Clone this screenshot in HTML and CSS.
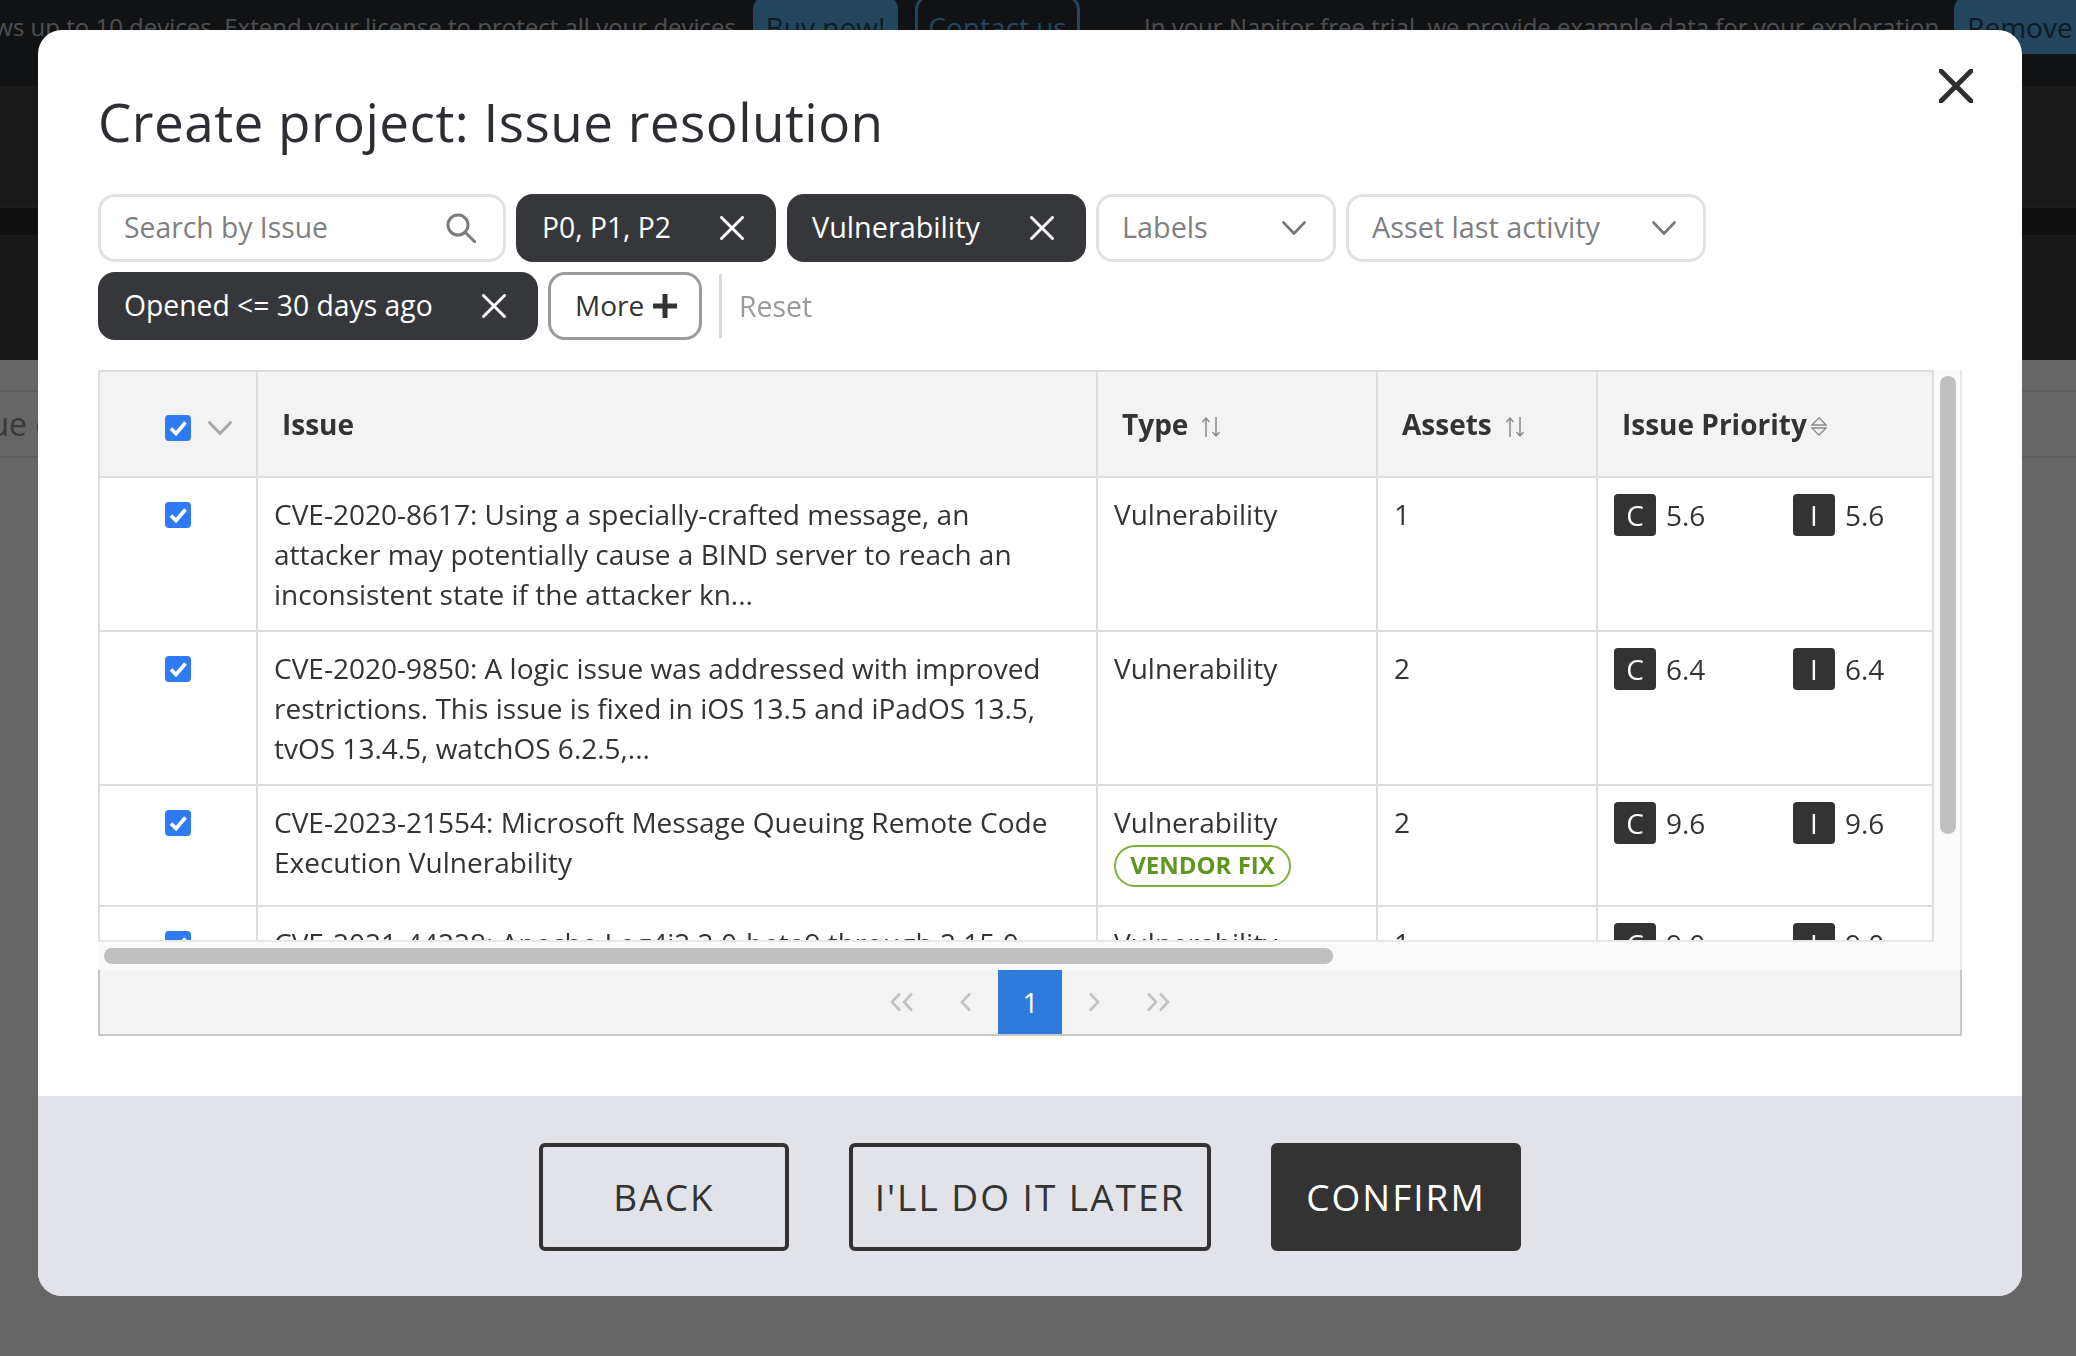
FILE: index.html
```html
<!DOCTYPE html>
<html lang="en">
<head>
<meta charset="utf-8">
<title>Create project: Issue resolution</title>
<link rel="stylesheet" href="styles.css">
</head>
<body>
<div class="page">
  <div class="banner">
    <div class="banner-left">
      <span class="banner-text">Your license allows up to 10 devices. Extend your license to protect all your devices</span>
      <span class="bn bn-fill bn-buy">Buy now!</span>
      <span class="bn bn-line">Contact us</span>
    </div>
    <span class="banner-text banner-trial">In your Napitor free trial, we provide example data for your exploration</span>
    <span class="bn bn-fill bn-remove">Remove</span>
  </div>
  <div class="nav"></div>
  <div class="subnav"></div>
  <div class="hero"></div>
  <div class="tabrow"><span class="tabtext">Issue count</span></div>
</div>

<div class="overlay">
  <div class="modal">
    <div class="modal-body">
      <div class="modal-head">
        <h1 class="title">Create project: Issue resolution</h1>
        <button class="close" aria-label="Close">
          <svg width="34" height="34" viewBox="0 0 34 34"><path d="M2 2 L32 32 M32 2 L2 32" class="ic-close"/></svg>
        </button>
      </div>

      <div class="filters">
        <div class="fbox f-search"><span class="ph">Search by Issue</span>
          <svg width="30" height="30" viewBox="0 0 30 30"><circle cx="12" cy="12" r="10" class="ic-search"/><path d="M19.5 19.5 L29 29" class="ic-search"/></svg>
        </div>
        <div class="fbox chip f-p"><span>P0, P1, P2</span>
          <svg width="24" height="24" viewBox="0 0 24 24"><path d="M1.5 1.5 L22.5 22.5 M22.5 1.5 L1.5 22.5" class="ic-x"/></svg>
        </div>
        <div class="fbox chip f-v"><span>Vulnerability</span>
          <svg width="24" height="24" viewBox="0 0 24 24"><path d="M1.5 1.5 L22.5 22.5 M22.5 1.5 L1.5 22.5" class="ic-x"/></svg>
        </div>
        <div class="fbox f-labels"><span class="ph">Labels</span>
          <svg width="24" height="14" viewBox="0 0 24 14"><path d="M1.5 1.5 L12 12.5 L22.5 1.5" class="ic-chev"/></svg>
        </div>
        <div class="fbox f-asset"><span class="ph">Asset last activity</span>
          <svg width="24" height="14" viewBox="0 0 24 14"><path d="M1.5 1.5 L12 12.5 L22.5 1.5" class="ic-chev"/></svg>
        </div>
        <div class="fbox chip f-o"><span>Opened &lt;= 30 days ago</span>
          <svg width="24" height="24" viewBox="0 0 24 24"><path d="M1.5 1.5 L22.5 22.5 M22.5 1.5 L1.5 22.5" class="ic-x"/></svg>
        </div>
        <div class="fbox f-more"><span>More</span>
          <svg width="24" height="24" viewBox="0 0 24 24"><path d="M12 0 V24 M0 12 H24" class="ic-plus"/></svg>
        </div>
        <div class="f-div"></div>
        <span class="f-reset">Reset</span>
      </div>

      <div class="frame">
        <div class="viewport">
          <table class="grid">
            <colgroup>
              <col class="c1"><col class="c2"><col class="c3"><col class="c4"><col class="c5">
            </colgroup>
            <thead>
              <tr>
                <th class="sel-h"><span class="sel-inner">
                  <span class="cb"><svg width="26" height="26" viewBox="0 0 26 26"><path d="M6 13.5 L11 18.5 L20.5 7.5" class="ic-check"/></svg></span>
                  <svg width="24" height="14" viewBox="0 0 24 14"><path d="M1.5 1.5 L12 12.5 L22.5 1.5" class="ic-chev-h"/></svg>
                </span></th>
                <th class="th-issue">Issue</th>
                <th><span class="th-in">Type
                  <svg width="20" height="20" viewBox="0 0 20 20"><path d="M5 20 V1 M1.5 5 L5 1 L8.5 5 M15 0 V19 M11.5 15 L15 19 L18.5 15" class="ic-sort"/></svg></span></th>
                <th><span class="th-in">Assets
                  <svg width="20" height="20" viewBox="0 0 20 20"><path d="M5 20 V1 M1.5 5 L5 1 L8.5 5 M15 0 V19 M11.5 15 L15 19 L18.5 15" class="ic-sort"/></svg></span></th>
                <th><span class="th-in th-prio">Issue Priority
                  <svg class="tri" width="16" height="19" viewBox="0 0 16 19"><path d="M8 0.8 L15 8 H1 Z M1 11 H15 L8 18.2 Z" class="ic-tri"/></svg></span></th>
              </tr>
            </thead>
            <tbody>
              <tr class="r-tall">
                <td class="sel"><span class="cb"><svg width="26" height="26" viewBox="0 0 26 26"><path d="M6 13.5 L11 18.5 L20.5 7.5" class="ic-check"/></svg></span></td>
                <td>CVE-2020-8617: Using a specially-crafted message, an attacker may potentially cause a BIND server to reach an inconsistent state if the attacker kn...</td>
                <td>Vulnerability</td>
                <td>1</td>
                <td><div class="scores"><span class="score"><b class="tag">C</b>5.6</span><span class="score"><b class="tag">I</b>5.6</span></div></td>
              </tr>
              <tr class="r-tall">
                <td class="sel"><span class="cb"><svg width="26" height="26" viewBox="0 0 26 26"><path d="M6 13.5 L11 18.5 L20.5 7.5" class="ic-check"/></svg></span></td>
                <td>CVE-2020-9850: A logic issue was addressed with improved restrictions. This issue is fixed in iOS 13.5 and iPadOS 13.5, tvOS 13.4.5, watchOS 6.2.5,...</td>
                <td>Vulnerability</td>
                <td>2</td>
                <td><div class="scores"><span class="score"><b class="tag">C</b>6.4</span><span class="score"><b class="tag">I</b>6.4</span></div></td>
              </tr>
              <tr class="r-mid">
                <td class="sel"><span class="cb"><svg width="26" height="26" viewBox="0 0 26 26"><path d="M6 13.5 L11 18.5 L20.5 7.5" class="ic-check"/></svg></span></td>
                <td>CVE-2023-21554: Microsoft Message Queuing Remote Code Execution Vulnerability</td>
                <td>Vulnerability<br><span class="vendor">VENDOR FIX</span></td>
                <td>2</td>
                <td><div class="scores"><span class="score"><b class="tag">C</b>9.6</span><span class="score"><b class="tag">I</b>9.6</span></div></td>
              </tr>
              <tr class="r-tall">
                <td class="sel"><span class="cb"><svg width="26" height="26" viewBox="0 0 26 26"><path d="M6 13.5 L11 18.5 L20.5 7.5" class="ic-check"/></svg></span></td>
                <td>CVE-2021-44228: Apache Log4j2 2.0-beta9 through 2.15.0 (excluding security releases 2.12.2, 2.12.3, and 2.3.1) JNDI features used in...</td>
                <td>Vulnerability</td>
                <td>1</td>
                <td><div class="scores"><span class="score"><b class="tag">C</b>9.0</span><span class="score"><b class="tag">I</b>9.0</span></div></td>
              </tr>
            </tbody>
          </table>
        </div>
        <div class="vtrack"><div class="vthumb"></div></div>
        <div class="htrack"><div class="hthumb"></div></div>
        <div class="corner"></div>
      </div>

      <div class="pager">
        <span class="pg"><svg width="24" height="20" viewBox="0 0 24 20"><path d="M10 1.5 L2 10 L10 18.5 M22 1.5 L14 10 L22 18.5" class="ic-pg"/></svg></span>
        <span class="pg"><svg width="12" height="20" viewBox="0 0 12 20"><path d="M10 1.5 L2 10 L10 18.5" class="ic-pg"/></svg></span>
        <span class="pg pg-on">1</span>
        <span class="pg"><svg width="12" height="20" viewBox="0 0 12 20"><path d="M2 1.5 L10 10 L2 18.5" class="ic-pg"/></svg></span>
        <span class="pg"><svg width="24" height="20" viewBox="0 0 24 20"><path d="M2 1.5 L10 10 L2 18.5 M14 1.5 L22 10 L14 18.5" class="ic-pg"/></svg></span>
      </div>
    </div>

    <div class="modal-foot">
      <button class="act act-back">BACK</button>
      <button class="act act-later">I'LL DO IT LATER</button>
      <button class="act act-go">CONFIRM</button>
    </div>
  </div>
</div>
</body>
</html>
```
FILE: styles.css
```css
* { box-sizing: border-box; }
html, body { margin: 0; padding: 0; height: 100%; }
body {
  font-family: "Open Sans", "Noto Sans", sans-serif;
  font-size: 28px;
  line-height: 40px;
  color: #333;
  background: #fff;
  overflow: hidden;
}
.page { width: 100%; }

/* background page */
.banner {
  height: 86px;
  background: #2a2d32;
  display: flex;
  align-items: flex-start;
  overflow: hidden;
  white-space: nowrap;
}
.banner-left {
  width: 1080px;
  flex: none;
  display: flex;
  justify-content: flex-end;
  gap: 17px;
  overflow: hidden;
  height: 60px;
}
.banner-text { color: #c4c6cc; flex: none; padding-top: 7px; font-size: 24px; }
.banner-trial { margin-left: 64px; margin-right: 15px; }
.bn {
  flex: none;
  height: 60px;
  margin-top: -6px;
  padding: 13px 26px 0;
  border-radius: 16px;
  line-height: 40px;
}
.bn-fill { background: #58afe6; color: #264255; }
.bn-buy { width: 145px; padding: 13px 0 0; text-align: center; }
.bn-remove { border-radius: 16px 0 0 16px; padding-left: 13px; width: 130px; }
.bn-line { border: 3px solid #58afe6; color: #58afe6; width: 165px; padding: 10px 0 0; text-align: center; }
.nav { height: 122px; background: #414141; border-bottom: 3px solid #4b4b4b; }
.subnav { height: 27px; background: #2a2a2a; }
.hero { height: 125px; background: #3c3c3c; }
.tabrow {
  margin-top: 30px;
  height: 68px;
  border-top: 2px solid #e6e6e6;
  border-bottom: 2px solid #e6e6e6;
  color: #8f8f8f;
  line-height: 64px;
  white-space: nowrap;
  font-size: 32px;
}
.tabtext { margin-left: -50px; display: inline-block; }

/* modal */
.overlay {
  position: fixed;
  inset: 0;
  background: rgba(0, 0, 0, 0.6);
  padding: 30px 54px 60px 38px;
}
.modal {
  height: 100%;
  background: #fff;
  border-radius: 24px;
  overflow: hidden;
  display: flex;
  flex-direction: column;
}
.modal-body { flex: 1; padding: 58px 60px 0; }
.modal-head {
  display: flex;
  justify-content: space-between;
  align-items: flex-start;
  height: 72px;
  margin-bottom: 34px;
}
.title {
  margin: 0;
  font-weight: 400;
  font-size: 53px;
  line-height: 68px;
  color: #2d2e33;
  letter-spacing: 0.48px;
}
.close {
  border: 0;
  background: none;
  padding: 0;
  width: 34px;
  height: 34px;
  margin: -19px -11px 0 0;
}
.ic-close { stroke: #2f2f2f; stroke-width: 5; fill: none; stroke-linecap: round; }

/* filters */
.filters {
  display: flex;
  flex-wrap: wrap;
  column-gap: 10px;
  row-gap: 10px;
  align-items: center;
  width: 1700px;
  margin-right: -20px;
  font-size: 28.3px;
}
.fbox {
  height: 68px;
  border-radius: 17px;
  border: 3px solid #e2e2e2;
  background: #fff;
  display: flex;
  align-items: center;
  justify-content: space-between;
  padding: 0 27px 0 23px;
  white-space: nowrap;
}
.fbox span { margin-bottom: 2px; }
.ph { color: #7f7f7f; }
.chip { background: #36373a; border-color: #36373a; color: #fff; padding-right: 29px; }
.f-search { width: 408px; }
.f-p { width: 260px; }
.f-v { width: 299px; margin-left: 1px; font-size: 28.8px; padding-left: 22px; }
.f-labels { width: 240px; font-size: 28.8px; }
.f-asset { width: 360px; font-size: 28.8px; }
.f-o { width: 440px; }
.f-more { width: 154px; border-color: #9a9a9a; color: #333; padding: 0 22px 0 24px; font-size: 28px; }
.f-div { width: 3px; height: 64px; background: #d9d9d9; margin-left: 7px; }
.f-reset { color: #9a9a9a; margin-left: 7px; font-size: 28.4px; }
.ic-search { stroke: #7b7b7b; stroke-width: 3; fill: none; stroke-linecap: round; }
.ic-x { stroke: #fff; stroke-width: 3; fill: none; stroke-linecap: round; }
.ic-chev { stroke: #767676; stroke-width: 2.6; fill: none; stroke-linecap: round; stroke-linejoin: round; }
.ic-chev-h { stroke: #a8a8a8; stroke-width: 3; fill: none; stroke-linecap: round; stroke-linejoin: round; }
.ic-plus { stroke: #333; stroke-width: 5; fill: none; }

/* table */
.frame {
  margin-top: 30px;
  display: grid;
  grid-template-columns: 1836px 28px;
  grid-template-rows: 572px 28px;
  background: #fafafa;
}
.viewport {
  overflow: hidden;
  border-bottom: 2px solid #e8e8e8;
  background: #fff;
}
.grid {
  table-layout: fixed;
  border-collapse: separate;
  border-spacing: 0;
  width: 1836px;
  border-left: 2px solid #ddd;
  border-top: 2px solid #ddd;
}
.c1 { width: 158px; }
.c2 { width: 840px; }
.c3 { width: 280px; }
.c4 { width: 220px; }
.c5 { width: 336px; }
th, td {
  border-right: 2px solid #ddd;
  border-bottom: 2px solid #ddd;
  text-align: left;
  vertical-align: top;
  padding: 16px;
  font-weight: 400;
}
th {
  height: 106px;
  background: #f3f3f3;
  font-weight: 700;
  vertical-align: middle;
  padding: 0 24px;
  color: #333;
}
.th-in { display: inline-flex; align-items: center; gap: 13px; }
.th-in svg { margin-top: 6px; flex: none; }
.th-prio { gap: 4px; }
.th-in .tri { margin-top: 4px; }
.sel-h { padding: 8px 0 0 65px; }
.sel-inner { display: flex; align-items: center; gap: 17px; }
.sel { padding: 24px 0 0 65px; }
.cb {
  display: block;
  width: 26px;
  height: 26px;
  border-radius: 4px;
  background: #2f7bf6;
  flex: none;
}
.cb svg { display: block; }
.ic-check { stroke: #fff; stroke-width: 3.6; fill: none; }
.ic-sort { stroke: #8a8a8a; stroke-width: 1.5; fill: none; }
.ic-tri { stroke: #8a8a8a; stroke-width: 1.3; fill: none; }
.r-tall { height: 154px; }
.r-mid { height: 121px; }
.scores { display: flex; }
.score { display: flex; flex: none; align-items: center; width: 179px; height: 42px; gap: 10px; line-height: 42px; }
.tag {
  width: 42px;
  height: 42px;
  border-radius: 4px;
  background: #333;
  color: #fff;
  font-weight: 400;
  text-align: center;
  flex: none;
}
.vendor {
  display: inline-block;
  height: 42px;
  width: 177px;
  margin-top: 3px;
  border: 2.5px solid #7fb13a;
  border-radius: 21px;
  color: #5f9620;
  font-weight: 700;
  font-size: 24px;
  line-height: 36px;
  text-align: center;
  vertical-align: top;
}
.vtrack { background: #fafafa; border-right: 2px solid #e8e8e8; padding: 6px 3px 0 6px; }
.vthumb { width: 16px; height: 458px; border-radius: 8px; background: #bfbfbf; }
.htrack { padding: 6px 0 0 6px; background: #fafafa; }
.hthumb { width: 1229px; height: 16px; border-radius: 8px; background: #bfbfbf; }
.corner { background: #fafafa; border-right: 2px solid #e8e8e8; }

/* pager */
.pager {
  display: flex;
  justify-content: center;
  height: 66px;
  background: #f3f3f3;
  border: 2px solid #c8c8c8;
  border-top: 0;
}
.pg { width: 64px; height: 64px; display: flex; align-items: center; justify-content: center; }
.pg-on { background: #2f7bdb; color: #fff; padding-left: 1px; }
.ic-pg { stroke: #c2c2c2; stroke-width: 2.6; fill: none; }

/* footer */
.modal-foot {
  height: 200px;
  flex: none;
  background: #e2e3e8;
  display: flex;
  justify-content: center;
  align-items: center;
  gap: 60px;
  padding-top: 2px;
}
.act {
  height: 108px;
  border-radius: 6px;
  border: 4px solid #333;
  background: none;
  color: #333;
  font-family: inherit;
  font-size: 37px;
  font-weight: 500;
  letter-spacing: 2px;
  padding: 0 0 2px;
}
.act-back, .act-go { width: 250px; }
.act-later { width: 362px; }
.act-go { background: #333; color: #fff; }
```
